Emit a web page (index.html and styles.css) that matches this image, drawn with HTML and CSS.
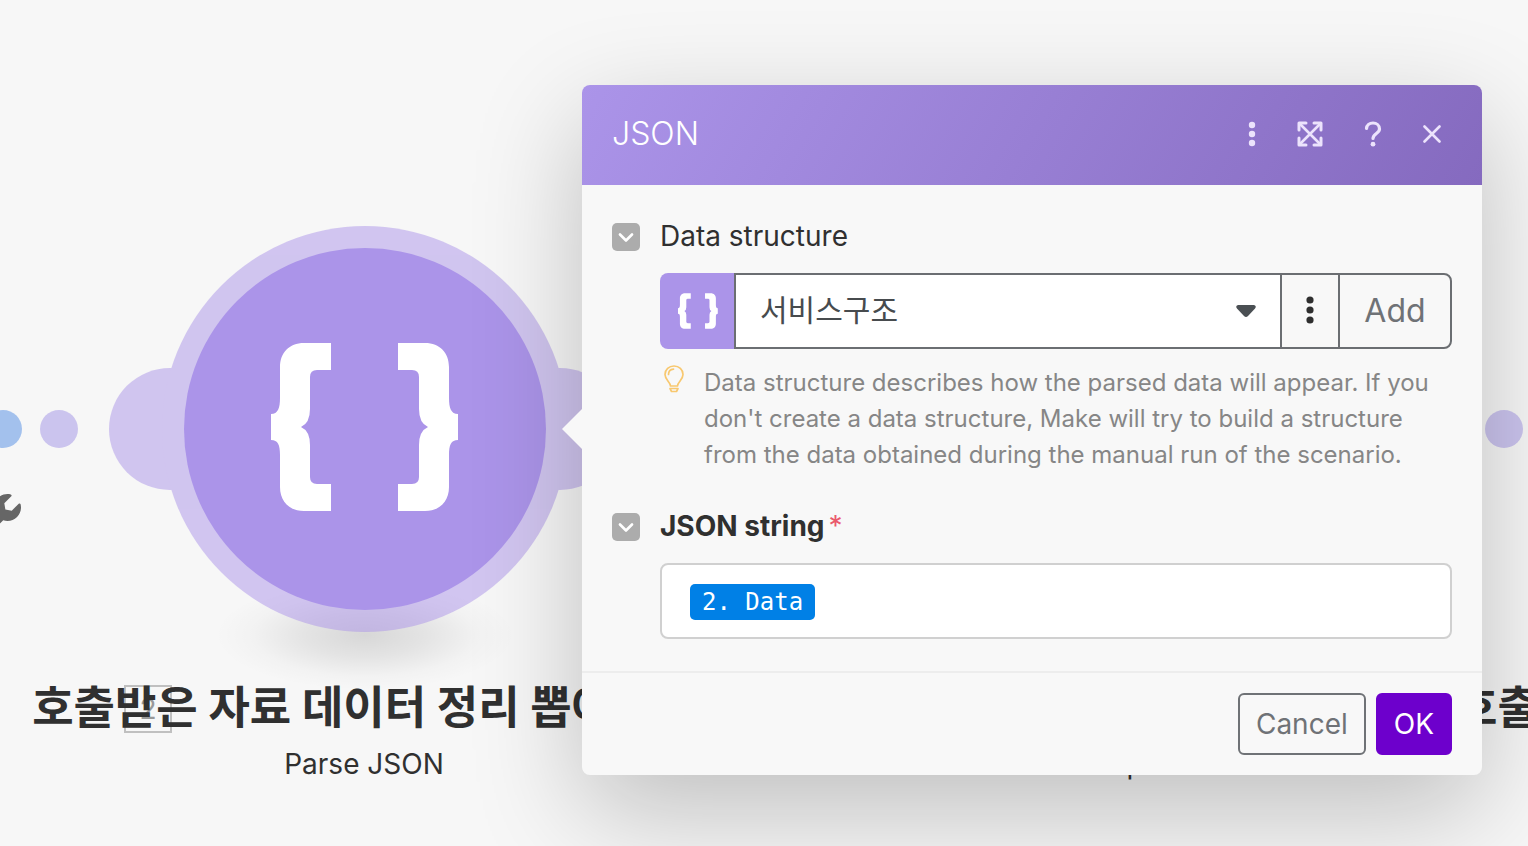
FILE: index.html
```html
<!DOCTYPE html>
<html lang="ko">
<head>
<meta charset="utf-8">
<meta name="viewport" content="width=device-width, initial-scale=1">
<title>JSON</title>
<link rel="stylesheet" href="styles.css">
</head>
<body>
<svg class="defs" aria-hidden="true">
  <symbol id="braces" viewBox="0 0 188 168">
    <path id="brace" d="M60 0V27H46Q39 27 39 34V66Q39 80 30 84Q39 88 39 102V134Q39 141 46 141H60V168H33C18 168 9 158 9 144V112C9 102 7 97 0 97V71C7 71 9 65 9 55V24C9 10 18 0 33 0Z"/>
    <use href="#brace" transform="translate(187 0) scale(-1 1)"/>
  </symbol>
</svg>

<main class="canvas">
  <span class="dot dot-blue"></span>
  <span class="dot dot-left"></span>
  <span class="dot dot-right"></span>
  <svg class="wrench" viewBox="0 0 512 512" aria-hidden="true"><path d="M507.73 109.1c-2.24-9.03-13.54-12.09-20.12-5.51l-74.36 74.36-67.88-11.31-11.31-67.88 74.36-74.36c6.62-6.62 3.43-17.9-5.66-20.16-47.38-11.74-99.55.91-136.58 37.93-39.64 39.64-50.55 97.1-34.05 147.2L18.74 402.76c-24.99 24.99-24.99 65.51 0 90.5 24.99 24.99 65.51 24.99 90.5 0l213.21-213.21c50.12 16.71 107.47 5.68 147.37-34.22 37.07-37.07 49.7-89.32 37.91-136.73z"/></svg>

  <div class="node-shadow"></div>
  <svg class="node" viewBox="0 0 512 406" role="img" aria-label="JSON module">
    <g class="node-ring">
      <circle cx="61" cy="203" r="61"/>
      <circle cx="451" cy="203" r="61"/>
      <circle cx="256" cy="203" r="203"/>
    </g>
    <circle class="node-core" cx="256" cy="203" r="181"/>
    <use class="node-braces" href="#braces" x="162" y="117" width="188" height="168"/>
  </svg>
  <span class="node-badge">2</span>
  <div class="node-label">
    <h2 class="node-title">호출받은 자료 데이터 정리 뽑아내기</h2>
    <p class="node-type">Parse JSON</p>
  </div>
  <p class="next-type">Set multiple variables</p>
  <h2 class="node-title next-title">호출</h2>

  <section class="dialog" role="dialog" aria-labelledby="dialog-title">
    <header class="dialog-head">
      <h1 class="dialog-title" id="dialog-title">JSON</h1>
      <div class="head-actions">
        <button class="head-btn" type="button" aria-label="More"><svg width="8" height="26" viewBox="0 0 8 26"><g fill="currentColor"><circle cx="4" cy="4" r="3.200"/><circle cx="4" cy="13" r="3.200"/><circle cx="4" cy="22" r="3.200"/></g></svg></button>
        <button class="head-btn" type="button" aria-label="Expand"><svg width="26" height="26" viewBox="0 0 26 26"><g fill="none" stroke="currentColor" stroke-linecap="round" stroke-linejoin="round"><path d="M2 9V2H9M17 2H24V9M24 17V24H17M9 24H2V17" stroke-width="3"/><path d="M3 3L23 23M23 3L3 23" stroke-width="2.600"/></g></svg></button>
        <button class="head-btn" type="button" aria-label="Help"><svg width="18" height="26" viewBox="0 0 18 26"><path d="M2.500 7.500C2.800 4 5.500 2 9 2S15.500 4.300 15.500 8C15.500 12.500 9 12.500 9 17.500" fill="none" stroke="currentColor" stroke-width="3.200" stroke-linecap="round"/><circle cx="9" cy="23.200" r="2.400" fill="currentColor"/></svg></button>
        <button class="head-btn" type="button" aria-label="Close"><svg width="18" height="18" viewBox="0 0 18 18"><path d="M1.500 1.500L16.500 16.500M16.500 1.500L1.500 16.500" fill="none" stroke="currentColor" stroke-width="2.600" stroke-linecap="round"/></svg></button>
      </div>
    </header>

    <form class="dialog-body">
      <div class="field">
        <button class="toggle" type="button" aria-label="Collapse Data structure"><svg width="16" height="10" viewBox="0 0 16 10"><path d="M2 2.500L8 8.500L14 2.500" fill="none" stroke="currentColor" stroke-width="2.600" stroke-linecap="round" stroke-linejoin="round"/></svg></button>
        <label class="field-label" for="structure">Data structure</label>
        <div class="field-main">
          <div class="picker">
            <span class="picker-icon"><svg width="40" height="36" aria-hidden="true"><use href="#braces"/></svg></span>
            <span class="picker-select">
              <select id="structure"><option>서비스구조</option></select>
              <svg class="caret" width="20" height="12" viewBox="0 0 20 12" aria-hidden="true"><path d="M2 0H18Q21 1 19 3.500L12 11Q10 13 8 11L1 3.500Q-1 1 2 0Z"/></svg>
            </span>
            <button class="picker-more" type="button" aria-label="More options"><svg width="8" height="28" viewBox="0 0 8 28"><g fill="currentColor"><circle cx="4" cy="4" r="3.600"/><circle cx="4" cy="14" r="3.600"/><circle cx="4" cy="24" r="3.600"/></g></svg></button>
            <button class="picker-add" type="button">Add</button>
          </div>
          <div class="hint">
            <svg class="bulb" width="20" height="28" viewBox="0 0 20 28" aria-hidden="true"><g fill="none" stroke="currentColor" stroke-width="1.700" stroke-linejoin="round" stroke-linecap="round"><path d="M6.500 21C6.500 17 1 15 1 9.500C1 4.500 5 1 10 1S19 4.500 19 9.500C19 15 13.500 17 13.500 21Z"/><path d="M4.500 9.500C4.500 6.500 6.500 4.500 9.500 4.200"/><path d="M6 23.500H14L12.500 26.500H7.500Z"/></g></svg>
            <p>Data structure describes how the parsed data will appear. If you don't create a data structure, Make will try to build a structure from the data obtained during the manual run of the scenario.</p>
          </div>
        </div>
      </div>

      <div class="field">
        <button class="toggle" type="button" aria-label="Collapse JSON string"><svg width="16" height="10" viewBox="0 0 16 10"><path d="M2 2.500L8 8.500L14 2.500" fill="none" stroke="currentColor" stroke-width="2.600" stroke-linecap="round" stroke-linejoin="round"/></svg></button>
        <label class="field-label field-label-strong" for="json-string">JSON string<span class="required">*</span></label>
        <div class="field-main token-box">
          <span class="token">2. Data</span>
          <input class="token-input" id="json-string" type="text">
        </div>
      </div>
    </form>

    <footer class="dialog-foot">
      <button class="btn" type="button">Cancel</button>
      <button class="btn btn-primary" type="button">OK</button>
    </footer>
  </section>
</main>
</body>
</html>
```

FILE: styles.css
```css
* {
  box-sizing: border-box;
}

body {
  margin: 0;
  background: #f7f7f7;
  color: #303030;
  font-family: Inter, "Noto Sans CJK KR", sans-serif;
}

h1,
h2,
p {
  margin: 0;
}

button,
input,
select {
  font: inherit;
  margin: 0;
}

button {
  display: inline-flex;
  align-items: center;
  justify-content: center;
  padding: 0;
  border: 0;
  background: none;
  cursor: pointer;
}

.defs {
  position: absolute;
  width: 0;
  height: 0;
}

/* Scenario canvas */
.canvas {
  position: relative;
  min-height: 100vh;
  overflow: hidden;
}

.dot {
  position: absolute;
  top: 410px;
  width: 38px;
  height: 38px;
  border-radius: 50%;
  background: #cbc4ee;
}

.dot-blue {
  left: -16px;
  background: #a3c1ed;
}

.dot-left {
  left: 40px;
}

.dot-right {
  left: 1485px;
}

.wrench {
  position: absolute;
  left: -27px;
  top: 494px;
  width: 48px;
  height: 48px;
  fill: #666;
}

.node-shadow {
  position: absolute;
  left: 215px;
  top: 580px;
  width: 300px;
  height: 110px;
  background: radial-gradient(closest-side, rgba(0, 0, 0, 0.13), rgba(0, 0, 0, 0.08) 40%, rgba(0, 0, 0, 0.02) 75%, transparent);
}

.node {
  position: absolute;
  left: 109px;
  top: 226px;
  width: 512px;
  height: 406px;
}

.node-ring {
  fill: #ab94e9;
  opacity: 0.5;
}

.node-core {
  fill: #ab94e9;
}

.node-braces {
  fill: #fff;
}

.node-badge {
  position: absolute;
  left: 124px;
  top: 685px;
  width: 48px;
  height: 48px;
  border: 2px solid #c0c0c0;
  color: #999;
  font-size: 28px;
  line-height: 44px;
  text-align: center;
}

.node-label {
  position: absolute;
  left: 28px;
  top: 676px;
  width: 672px;
  text-align: center;
}

.node-title {
  font-size: 45px;
  font-weight: 700;
  line-height: 64px;
  white-space: nowrap;
}

.node-type,
.next-type {
  font-size: 28px;
  line-height: 48px;
}

.next-type {
  position: absolute;
  left: 1011px;
  top: 740px;
}

.next-title {
  position: absolute;
  left: 1456px;
  top: 676px;
}

/* Module settings dialog */
.dialog {
  position: absolute;
  left: 582px;
  top: 85px;
  width: 900px;
  border-radius: 8px;
  background: #f8f8f8;
  box-shadow: 0 36px 110px rgba(0, 0, 0, 0.23);
}

.dialog::before {
  content: "";
  position: absolute;
  left: -20px;
  top: 324px;
  border: 20px solid transparent;
  border-left: 0;
  border-right-color: #f8f8f8;
}

.dialog-head {
  display: flex;
  align-items: center;
  justify-content: space-between;
  height: 100px;
  padding: 0 41px 3px 30px;
  border-radius: 8px 8px 0 0;
  background: linear-gradient(120deg, #ab94e9, #856abf);
  color: #fff;
}

.dialog-title {
  font-size: 32px;
  font-weight: 300;
}

.head-actions {
  display: flex;
  gap: 41px;
}

.head-btn {
  color: #ece3fc;
}

.dialog-body {
  display: grid;
  gap: 32px;
  padding: 30px 30px 32px;
}

.field {
  display: grid;
  grid-template-columns: 28px 1fr;
  column-gap: 20px;
  row-gap: 14px;
  align-items: center;
}

.toggle {
  width: 28px;
  height: 28px;
  border-radius: 5px;
  background: #acacac;
  color: #fff;
}

.field-label {
  padding-bottom: 2px;
  font-size: 28px;
  line-height: 42px;
}

.field-label-strong {
  font-weight: 700;
}

.required {
  margin-left: 4px;
  color: #ea5a6c;
  font-weight: 400;
}

.field-main {
  grid-column: 2;
}

.picker {
  display: flex;
  height: 76px;
  color: #6b6e72;
}

.picker-icon {
  display: flex;
  align-items: center;
  justify-content: center;
  width: 74px;
  padding-left: 2px;
  border-radius: 8px 0 0 8px;
  background: #ab94e9;
  fill: #fff;
}

.picker-select {
  position: relative;
  flex: 1;
}

.picker-select select {
  width: 100%;
  height: 100%;
  padding: 0 60px 2px 24px;
  border: 2px solid #6b6e72;
  border-right: 0;
  border-radius: 0;
  background: #fff;
  color: #474b4e;
  font-size: 30px;
  appearance: none;
}

.caret {
  position: absolute;
  right: 24px;
  top: 32px;
  fill: #4a4f53;
}

.picker-more {
  width: 58px;
  padding-bottom: 2px;
  border: 2px solid #6b6e72;
  border-right: 0;
  color: #2f2f2f;
}

.picker-add {
  width: 114px;
  padding-bottom: 2px;
  border: 2px solid #6b6e72;
  border-radius: 0 8px 8px 0;
  color: #6f7276;
  font-size: 32px;
}

.hint {
  display: flex;
  gap: 20px;
  padding: 16px 0 0 4px;
  color: #868686;
  font-size: 24px;
  line-height: 36px;
}

.bulb {
  flex: none;
  color: #f8c86f;
}

.token-box {
  display: flex;
  align-items: center;
  height: 76px;
  padding: 2px 28px 0;
  border: 2px solid #d0d0d0;
  border-radius: 8px;
  background: #fff;
}

.token {
  padding: 0 12px;
  border-radius: 5px;
  background: #0080e6;
  color: #fff;
  font-family: "DejaVu Sans Mono", monospace;
  font-size: 24px;
  line-height: 36px;
}

.token-input {
  flex: 1;
  min-width: 0;
  border: 0;
  outline: 0;
  background: none;
  font-size: 24px;
}

.dialog-foot {
  display: flex;
  justify-content: flex-end;
  gap: 10px;
  padding: 20px 30px;
  border-top: 2px solid #ededed;
}

.btn {
  height: 62px;
  padding: 0 16px;
  border: 2px solid #6f7276;
  border-radius: 6px;
  color: #6f7276;
  font-size: 28px;
}

.btn-primary {
  border-color: #6d00cc;
  background: #6d00cc;
  color: #fff;
}
```
